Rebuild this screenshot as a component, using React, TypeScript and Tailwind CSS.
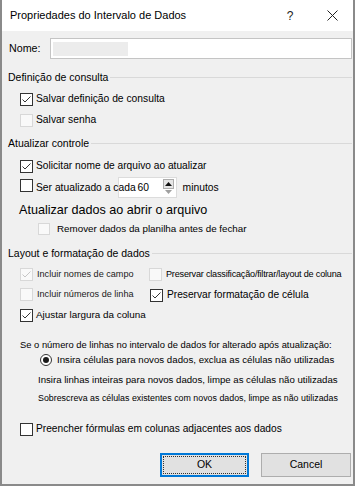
import React from 'react';

function Check({ checked = false, disabled = false, small = false }: { checked?: boolean; disabled?: boolean; small?: boolean }) {
  return (
    <span
      className={`${small ? 'w-[12px] h-[12px]' : 'w-[13px] h-[13px]'} shrink-0 border flex items-center justify-center ${
        disabled ? 'border-[#d8d8d8] bg-[#f9f9f9]' : 'border-[#333333] bg-white'
      }`}
    >
      {checked && (
        <svg viewBox="0 0 11 11" className="w-[11px] h-[11px]">
          <polyline points="1.5,5.5 4,8 9.5,2.5" fill="none" stroke={disabled ? '#c6c6c6' : '#333333'} strokeWidth="1" />
        </svg>
      )}
    </span>
  );
}

function Radio() {
  return (
    <span className="w-[12px] h-[12px] shrink-0 rounded-full border border-[#333333] bg-white flex items-center justify-center">
      <span className="w-[6px] h-[6px] rounded-full bg-[#1a1a1a]" />
    </span>
  );
}

function GroupHeader({ label, className }: { label: string; className: string }) {
  return (
    <div className={`flex items-center h-[14px] ml-[6px] mr-[1px] ${className}`}>
      <span className="text-[10.5px] whitespace-nowrap">{label}</span>
      <div className="flex-1 h-px bg-[#d9d9d9] ml-[2px] -mt-[2px]" />
    </div>
  );
}

export default function App() {
  return (
    <div className="w-[355px] h-[486px] flex flex-col bg-[#f0f0f0] border-x-2 border-b-2 border-[#8a8a8a] font-['Liberation_Sans',Arial,sans-serif] text-black overflow-hidden">
      {/* Title bar */}
      <div className="h-[31px] shrink-0 bg-white flex items-center pl-[8px]">
        <span className="flex-1 text-[11px] whitespace-nowrap">Propriedades do Intervalo de Dados</span>
        <span className="w-[12px] text-center text-[12px] text-[#222]">?</span>
        <svg viewBox="0 0 11 11" className="w-[11px] h-[11px] ml-[31px] mr-[15px]">
          <path d="M0.5 0.5 L10.5 10.5 M10.5 0.5 L0.5 10.5" stroke="#222" strokeWidth="1" fill="none" />
        </svg>
      </div>

      {/* Nome */}
      <div className="flex items-center pt-[7px] pl-[7px] pr-[1px]">
        <span className="w-[41px] text-[10.7px]">Nome:</span>
        <div className="flex-1 h-[21px] border border-[#c4c4c4] bg-white flex items-center pl-[2px]">
          <div className="w-[75px] h-[14px] bg-[#ececec]" />
        </div>
      </div>

      <GroupHeader label="Definição de consulta" className="mt-[12px]" />
      <div className="flex items-center h-[14px] mt-[7px] pl-[18px] gap-[3px]">
        <Check checked />
        <span className="text-[10.3px] whitespace-nowrap">Salvar definição de consulta</span>
      </div>
      <div className="flex items-center h-[14px] mt-[7px] pl-[18px] gap-[3px]">
        <Check disabled />
        <span className="text-[10.3px] whitespace-nowrap">Salvar senha</span>
      </div>

      <GroupHeader label="Atualizar controle" className="mt-[10px]" />
      <div className="flex items-center h-[14px] mt-[8px] pl-[18px] gap-[3px]">
        <Check checked />
        <span className="text-[10.2px] whitespace-nowrap">Solicitar nome de arquivo ao atualizar</span>
      </div>
      <div className="flex h-[21px] mt-[4px] pl-[18px]">
        <div className="mt-[2px]">
          <Check />
        </div>
        <span className="relative z-10 self-center ml-[3px] text-[10.3px] whitespace-nowrap">Ser atualizado a cada</span>
        <div className="ml-[-18px] w-[59px] h-[21px] bg-white border border-[#dcdcdc] flex items-center">
          <span className="flex-1 pl-[19px] text-[10.3px]">60</span>
          <div className="w-[11px] h-full mr-[2px] py-[1px] flex flex-col">
            <div className="flex-1 border border-[#adadad] bg-[#e6e6e6] flex items-center justify-center">
              <svg viewBox="0 0 7 4" className="w-[7px] h-[4px]">
                <polygon points="3.5,0 7,4 0,4" fill="#111" />
              </svg>
            </div>
            <div className="flex-1 flex items-center justify-center">
              <svg viewBox="0 0 7 4" className="w-[7px] h-[4px]">
                <polygon points="0,0 7,0 3.5,4" fill="#a0a0a0" />
              </svg>
            </div>
          </div>
        </div>
        <span className="self-center ml-[6px] text-[10.3px]">minutos</span>
      </div>
      <div className="flex items-center h-[14px] mt-[5px] pl-[17px]">
        <span className="text-[12.6px] whitespace-nowrap">Atualizar dados ao abrir o arquivo</span>
      </div>
      <div className="flex items-center h-[14px] mt-[5px] pl-[36px] gap-[7px]">
        <Check disabled small />
        <span className="text-[9.8px] whitespace-nowrap">Remover dados da planilha antes de fechar</span>
      </div>

      <GroupHeader label="Layout e formatação de dados" className="mt-[11px]" />
      <div className="flex items-center h-[14px] mt-[7px] pl-[18px]">
        <div className="w-[129px] flex items-center gap-[4px]">
          <Check checked disabled />
          <span className="text-[9.1px] whitespace-nowrap text-[#1a1a1a]">Incluir nomes de campo</span>
        </div>
        <div className="flex items-center gap-[4px]">
          <Check disabled />
          <span className="text-[9.1px] tracking-[-0.2px] whitespace-nowrap">Preservar classificação/filtrar/layout de coluna</span>
        </div>
      </div>
      <div className="flex items-center h-[14px] mt-[6px] pl-[18px]">
        <div className="w-[130px] flex items-center gap-[4px]">
          <Check disabled />
          <span className="text-[9.1px] whitespace-nowrap text-[#1a1a1a]">Incluir números de linha</span>
        </div>
        <div className="flex items-center gap-[4px]">
          <Check checked />
          <span className="text-[10.2px] whitespace-nowrap">Preservar formatação de célula</span>
        </div>
      </div>
      <div className="flex items-center h-[14px] mt-[6px] pl-[18px] gap-[3px]">
        <Check checked />
        <span className="text-[9.9px] whitespace-nowrap">Ajustar largura da coluna</span>
      </div>

      <div className="flex items-center h-[14px] mt-[16px] pl-[18px]">
        <span className="text-[9.4px] whitespace-nowrap">Se o número de linhas no intervalo de dados for alterado após atualização:</span>
      </div>
      <div className="flex items-center h-[14px] mt-[1px] pl-[38px] gap-[5px]">
        <Radio />
        <span className="text-[9.7px] whitespace-nowrap">Insira células para novos dados, exclua as células não utilizadas</span>
      </div>
      <div className="flex items-center h-[14px] mt-[6px] pl-[36px]">
        <span className="text-[9.65px] whitespace-nowrap">Insira linhas inteiras para novos dados, limpe as células não utilizadas</span>
      </div>
      <div className="flex items-center h-[14px] mt-[5px] pl-[36px]">
        <span className="text-[8.85px] whitespace-nowrap">Sobrescreva as células existentes com novos dados, limpe as não utilizadas</span>
      </div>

      <div className="flex items-center h-[14px] mt-[16px] pl-[18px] gap-[3px]">
        <Check />
        <span className="text-[10.2px] whitespace-nowrap">Preencher fórmulas em colunas adjacentes aos dados</span>
      </div>

      {/* Buttons */}
      <div className="flex justify-end gap-[12px] mt-[17px] pr-[2px]">
        <button className="w-[89px] h-[24px] border-2 border-[#0078d7] bg-[#e1e1e1] p-[1px]">
          <div className="w-full h-full border border-dotted border-[#333] flex items-center justify-center text-[10.5px]">OK</div>
        </button>
        <button className="w-[90px] h-[24px] border border-[#adadad] bg-[#e1e1e1] flex items-center justify-center text-[10.5px]">
          Cancel
        </button>
      </div>
    </div>
  );
}
